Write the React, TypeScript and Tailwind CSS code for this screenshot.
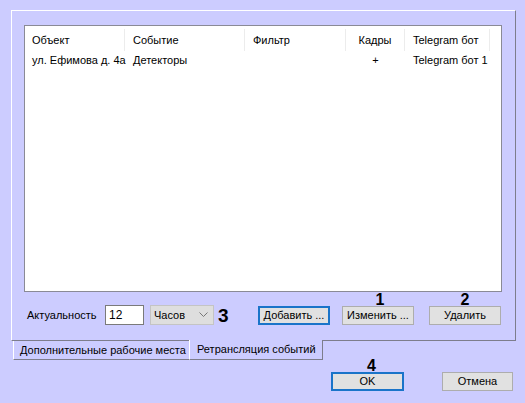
import React from 'react';

const columns = [
  { title: 'Объект', w: 'w-[100px]', align: 'text-left pl-[7px]' },
  { title: 'Событие', w: 'w-[120px]', align: 'text-left pl-[8px]' },
  { title: 'Фильтр', w: 'w-[101px]', align: 'text-left pl-[8px]' },
  { title: 'Кадры', w: 'w-[59px]', align: 'text-center' },
  { title: 'Telegram бот', w: 'w-[85px]', align: 'text-left pl-[8px]' },
];

const row = ['ул. Ефимова д. 4а', 'Детекторы', '', '+', 'Telegram бот 1'];

function Btn({ label, focused = false, w = 'w-[72px]' }: { label: string; focused?: boolean; w?: string }) {
  return (
    <button
      className={`${w} h-[19px] flex items-center justify-center bg-[#e1e1e1] text-black leading-none ${
        focused ? 'border-2 border-[#1a74c9]' : 'border border-[#adadad]'
      }`}
    >
      {label}
    </button>
  );
}

// annotation digits drawn over the buttons
function Mark({ n, shift = '' }: { n: string; shift?: string }) {
  return (
    <span className={`absolute left-1/2 -translate-x-1/2 -top-[14px] text-[16px] font-bold leading-none ${shift}`}>{n}</span>
  );
}

export default function App() {
  return (
    <div className="w-[525px] h-[403px] bg-[#ccccff] text-black text-[11px] font-['Liberation_Sans',Arial,sans-serif] overflow-hidden">
      <div className="pt-[10px] pl-[11px]">
        {/* main panel */}
        <div className="w-[505px] h-[331px] border border-t-white border-l-white border-r-[#7d7d8c] border-b-[#7d7d8c] flex flex-col pt-[14px] pl-[12px]">
          <div className="w-[478px] h-[267px] bg-white border border-[#8a8a96] pt-[3px]">
            <div className="flex h-[22px] items-center">
              {columns.map((c) => (
                <div
                  key={c.title}
                  className={`${c.w} ${c.align} h-full flex items-center border-r border-[#ececec] ${c.align.includes('center') ? 'justify-center' : ''}`}
                >
                  {c.title}
                </div>
              ))}
            </div>
            <div className="flex h-[18px] items-center">
              {row.map((v, i) => (
                <div key={i} className={`${columns[i].w} ${columns[i].align} whitespace-nowrap`}>
                  {v}
                </div>
              ))}
            </div>
          </div>

          <div className="flex items-center mt-[13px] h-[20px]">
            <span className="w-[81px] pl-[3px]">Актуальность</span>
            <div className="w-[39px] h-[20px] bg-white border border-[#7a7a7a] flex items-center pl-[3px] text-[12px]">12</div>
            <div className="ml-[6px] w-[64px] h-[20px] bg-[#dedede] border border-[#c4c4c4] flex items-center justify-between pl-[3px] pr-[5px]">
              <span>Часов</span>
              <svg width="9" height="6" viewBox="0 0 9 6" className="text-[#777]">
                <path d="M0.5 0.5 L4.5 4.5 L8.5 0.5" fill="none" stroke="currentColor" strokeWidth="1" />
              </svg>
            </div>
            <span className="ml-[4px] w-[12px] text-[19px] font-bold leading-none">3</span>
            <div className="ml-[28px]">
              <Btn label="Добавить ..." focused />
            </div>
            <div className="relative ml-[12px]">
              <Mark n="1" shift="ml-[2px]" />
              <Btn label="Изменить ..." />
            </div>
            <div className="relative ml-[15px]">
              <Mark n="2" />
              <Btn label="Удалить" />
            </div>
          </div>
        </div>

        {/* tabs */}
        <div className="flex pl-[2px]">
          <div className="w-[176px] h-[19px] border-l border-b border-l-white border-b-[#7d7d8c] flex items-center pl-[6px] whitespace-nowrap">
            Дополнительные рабочие места
          </div>
          <div className="relative z-10 -mt-px w-[134px] h-[20px] bg-[#ccccff] border-l border-r border-b border-l-white border-r-[#7d7d8c] border-b-[#7d7d8c] flex items-center pl-[7px] whitespace-nowrap">
            Ретрансляция событий
          </div>
        </div>
      </div>

      {/* dialog buttons */}
      <div className="flex mt-[12px] ml-[331px]">
        <div className="relative">
          <Mark n="4" shift="ml-[4px]" />
          <Btn label="OK" focused w="w-[73px]" />
        </div>
        <div className="ml-[38px]">
          <Btn label="Отмена" w="w-[71px]" />
        </div>
      </div>
    </div>
  );
}
